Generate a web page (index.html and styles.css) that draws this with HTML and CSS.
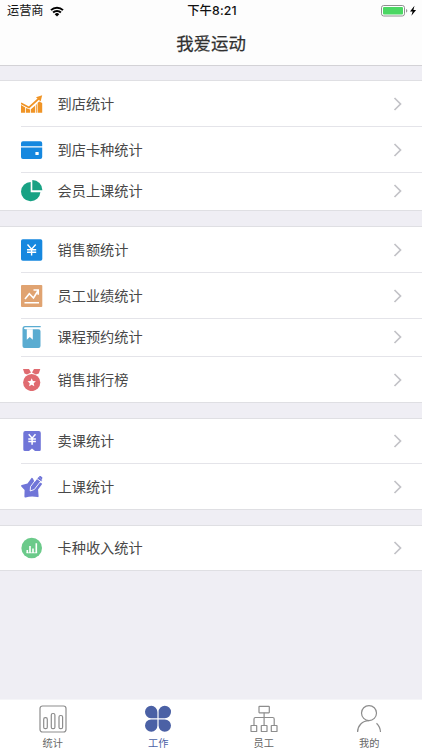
FILE: index.html
```html
<!DOCTYPE html>
<html lang="zh-CN">
<head>
<meta charset="utf-8">
<title>我爱运动</title>
<link rel="stylesheet" href="styles.css">
</head>
<body>
<div class="app">
  <header class="header">
    <div class="status">
      <div class="carrier"><span>运营商</span>
        <svg width="14" height="11" viewBox="0 0 14 11"><path d="M1 4.100a8.600 8.600 0 0 1 12 0M3.100 6.500a5.600 5.600 0 0 1 7.800 0" fill="none" stroke="#000" stroke-width="2"/><path d="M4.700 8.200a3.300 3.300 0 0 1 4.600 0L7 10.600z"/></svg>
      </div>
      <div class="time">下午8:21</div>
      <div class="power">
        <svg width="36" height="12" viewBox="0 0 36 12"><rect x=".5" y=".5" width="23" height="10.500" rx="2.200" fill="#fff" stroke="#8f8f8f"/><rect x="2" y="2" width="20" height="7.500" rx="1" fill="#4bd763"/><path d="M25 4v3.500q1.300-.4 1.300-1.800T25 4z" fill="#999"/><path d="M33.500.8l-4.500 5.600h2.600l-1.200 4.400 4.700-5.900h-2.700z"/></svg>
      </div>
    </div>
    <h1 class="title">我爱运动</h1>
  </header>
  <main class="content">
    <section class="group">
      <a class="row">
        <svg class="icon" viewBox="0 0 22 22"><path d="M0 12l4.200 2.500v5.300H0zM5 15l4 1.500V19.800H5zM9.800 16.300l4.200-3.500v7H9.800zM14.800 12l1-1v8.800h-1zM16.600 10l1.600-1.600 3 1.600v9.800h-4.600z" fill="#f09426"/><path d="M0 10.300l8 4.200L18.500 5" fill="none" stroke="#f09426" stroke-width="1.700"/><path d="M15 4.200l6.200-2-1.600 6.200z" fill="#f09426"/></svg>
        <span class="label">到店统计</span><svg class="chevron" viewBox="0 0 9 14"><path d="M1.500 1l6 6-6 6"/></svg></a>
      <a class="row">
        <svg class="icon" viewBox="0 0 22 22"><path d="M2 2.300h17.200q2 0 2 2v2.900H0V4.300q0-2 2-2zM0 8.500h21.200v9.400q0 2-2 2H2q-2 0-2-2z" fill="#1688df"/><rect x="14.400" y="12.900" width="3.300" height="3.200" rx=".5" fill="#fff"/></svg>
        <span class="label">到店卡种统计</span><svg class="chevron" viewBox="0 0 9 14"><path d="M1.500 1l6 6-6 6"/></svg></a>
      <a class="row short">
        <svg class="icon" viewBox="0 0 22 22"><path d="M9.700 1.900v10.400H19.400A9.700 9.700 0 1 1 9.700 1.900z" fill="#18a284"/><path d="M11.300 0a10 10 0 0 1 10 10.300h-10z" fill="#18a284"/></svg>
        <span class="label">会员上课统计</span><svg class="chevron" viewBox="0 0 9 14"><path d="M1.500 1l6 6-6 6"/></svg></a>
    </section>
    <section class="group">
      <a class="row">
        <svg class="icon" viewBox="0 0 22 22"><rect width="21.300" height="21.500" y=".3" rx="1.800" fill="#1688df"/><path d="M6.500 5.500l4.100 4.700 4.100-4.700M10.600 10.200V16.500M6 10.700h9.200M6 13.300h9.200" fill="none" stroke="#fff" stroke-width="1.400"/></svg>
        <span class="label">销售额统计</span><svg class="chevron" viewBox="0 0 9 14"><path d="M1.500 1l6 6-6 6"/></svg></a>
      <a class="row">
        <svg class="icon" viewBox="0 0 22 22"><rect width="21.300" height="22" rx="1" fill="#e0a371"/><path d="M4 14l4.300-5.300 4.200 4.300 4.300-7M12.500 5h4.700v4.800M3.500 17.700h14.500" fill="none" stroke="#fff" stroke-width="1.600"/></svg>
        <span class="label">员工业绩统计</span><svg class="chevron" viewBox="0 0 9 14"><path d="M1.500 1l6 6-6 6"/></svg></a>
      <a class="row short">
        <svg class="icon" viewBox="0 0 22 22"><path d="M4 0h15.700v1.200H4.500Q3 1.200 3 2.200t1.500 1h13q2 0 2 2v14.800q0 2-2 2H3.500q-2 0-2-2V2.500Q1.500 0 4 0z" fill="#5aacd1"/><path d="M5.800 3.200h6v10.500L8.800 11l-3 2.700z" fill="#fff"/></svg>
        <span class="label">课程预约统计</span><svg class="chevron" viewBox="0 0 9 14"><path d="M1.500 1l6 6-6 6"/></svg></a>
      <a class="row">
        <svg class="icon" viewBox="0 0 22 22"><path d="M2 0h6l2 3.500L6 5.500 3.500 4.600zM13 0h6.300l-1.500 4.500-3 1L11 3.500z" fill="#e06b70"/><circle cx="10.700" cy="13.500" r="8.600" fill="#e06b70"/><path d="M10.700 9.300l1.200 2.700 3 .3-2.200 2 .6 2.900-2.600-1.500-2.600 1.500.6-2.900-2.200-2 3-.3z" fill="#fff"/></svg>
        <span class="label">销售排行榜</span><svg class="chevron" viewBox="0 0 9 14"><path d="M1.500 1l6 6-6 6"/></svg></a>
    </section>
    <section class="group compact">
      <a class="row">
        <svg class="icon" viewBox="0 0 22 22"><path d="M4.300 1h13.500q2 0 2 2v16.500q0 1.700-1.700 1.500L14 21l-3-2.500L8 21l-4 .1q-1.700 0-1.700-1.700V3q0-2 2-2z" fill="#7075d8"/><path d="M7.700 4.200l3.400 4 3.400-4M11.100 8.200V14.700M7.300 8.900h7.600M7.300 11.500h7.600" fill="none" stroke="#fff" stroke-width="1.500"/></svg>
        <span class="label">卖课统计</span><svg class="chevron" viewBox="0 0 9 14"><path d="M1.500 1l6 6-6 6"/></svg></a>
      <a class="row">
        <svg class="icon" viewBox="0 0 22 22"><path d="M10.500 2q.7-.5 1.500.7l1.500 3 7 1.500q1 .4.300 1.200l-3.700 5 .5 6.800q0 1.200-1 .9-6-1.500-12 .3-1.300.2-1.200-1l.2-6.300L.3 10.500Q-.3 9.300.8 9l5.700-1.500z" fill="#7075d8"/><path d="M9.400 15.300l.9-4.700L17.500 1l3.800 3-7.500 9.500z" fill="#7075d8"/><path d="M15.500 2.600L9.500 10.700l-.3 4.300 4.100-1.500 6.800-8.800M15.800 2.500l4.200 3.200" fill="none" stroke="#fff" stroke-width=".9"/><path d="M18.400.2q.6-.5 1.200-.1l1.500 1.200q.6.500.1 1.200l-.7 1L17.800 1.200z" fill="#7075d8"/></svg>
        <span class="label">上课统计</span><svg class="chevron" viewBox="0 0 9 14"><path d="M1.500 1l6 6-6 6"/></svg></a>
    </section>
    <section class="group single">
      <a class="row">
        <svg class="icon" viewBox="0 0 22 22"><circle cx="10.700" cy="11" r="10.300" fill="#6bca8a"/><path d="M6.300 13v3M9 9v7M12 11.500V16M15.300 6.200V16" stroke="#fff" stroke-width="1.600"/><path d="M5.500 15.800h10.600" stroke="#fff" stroke-width=".8"/></svg>
        <span class="label">卡种收入统计</span><svg class="chevron" viewBox="0 0 9 14"><path d="M1.500 1l6 6-6 6"/></svg></a>
    </section>
  </main>
  <nav class="tabs">
    <a class="tab"><svg viewBox="0 0 28 28"><rect x="1" y="1" width="26" height="26" rx="2.500"/><rect x="4.700" y="12.700" width="3.600" height="11" rx="1.500"/><rect x="12.300" y="8.500" width="3.600" height="15.200" rx="1.500"/><rect x="20" y="10.500" width="3.600" height="13.200" rx="1.500"/></svg><span>统计</span></a>
    <a class="tab active"><svg viewBox="0 0 28 28"><path d="M13.400 13.200H7a6.200 6.200 0 1 1 6.400-6.200zM14.600 13.200V7a6.200 6.200 0 1 1 6.200 6.200zM13.400 14.400v6A6.200 6.200 0 1 1 7 14.400zM14.600 14.400h6.200a6.200 6.200 0 1 1-6.200 6.200z"/></svg><span>工作</span></a>
    <a class="tab"><svg viewBox="0 0 28 28"><rect x="9" y="1.300" width="10.300" height="6.500" rx=".5"/><rect x="1" y="20.500" width="5.700" height="6" rx=".3"/><rect x="11.300" y="20.500" width="5.700" height="6" rx=".3"/><rect x="21.300" y="20.500" width="5.700" height="6" rx=".3"/><path d="M14.100 7.800v12.700M4 20.500V14q0-1.500 1.500-1.500h17.200q1.500 0 1.500 1.500v6.500"/></svg><span>员工</span></a>
    <a class="tab"><svg viewBox="0 0 28 28"><circle cx="14" cy="8.100" r="7.500"/><path d="M2.600 27c0-6.200 4.700-11.300 11.400-11.300M21.500 18.200q3.700 3.400 4 8.800"/></svg><span>我的</span></a>
  </nav>
</div>
</body>
</html>
```
FILE: styles.css
```css
* { box-sizing: border-box; }
body {
  margin: 0;
  font-family: Inter, "Noto Sans CJK SC", sans-serif;
  color: #484848;
}
svg { display: block; flex: none; }
.app {
  width: 422px;
  height: 750px;
  display: flex;
  flex-direction: column;
  background: #efeef4;
  overflow: hidden;
}
.header {
  height: 66px;
  background: #fdfdfd;
  border-bottom: 1px solid #d3d2d6;
}
.status {
  height: 22px;
  display: grid;
  grid-template-columns: 1fr auto 1fr;
  align-items: center;
  padding: 0 5px 0 7px;
  color: #111;
  font-size: 12px;
  line-height: 22px;
}
.carrier { display: flex; align-items: center; gap: 6px; font-size: 12.200px; }
.time { font-weight: 500; font-size: 12.300px; letter-spacing: .15px; }
.power { display: flex; justify-content: flex-end; }
.title {
  margin: 0;
  font-size: 17.400px;
  font-weight: 400;
  -webkit-text-stroke: .25px #303030;
  line-height: 43px;
  text-align: center;
  color: #303030;
}
.content { flex: 1; padding-top: 14px; }
.group {
  background: #fff;
  border-top: 1px solid #dfdfe3;
  border-bottom: 1px solid #dfdfe3;
  margin-bottom: 15px;
}
.row {
  height: 46px;
  margin-left: 20.500px;
  padding-right: 20px;
  display: flex;
  align-items: center;
  border-bottom: 1px solid #e4e4e9;
}
.row.short { height: 38px; padding-bottom: 1px; }
.row:last-child { border-bottom: 0; height: 45px; }
.row.short:last-child { height: 37px; }
.compact .row { height: 45px; }
.compact .row:last-child { height: 45px; }
.single .row:last-child { height: 44px; }
.icon { width: 22px; height: 22px; }
.label {
  flex: 1;
  margin-left: 15px;
  font-size: 14.200px;
  line-height: 22px;
}
.chevron { width: 9px; height: 14px; fill: none; stroke: #c2c2c7; stroke-width: 1.700; }
.tabs {
  height: 51px;
  display: grid;
  grid-template-columns: repeat(4, 1fr);
  background: #fff;
  border-top: 1px solid #f5f5f8;
}
.tab {
  display: flex;
  flex-direction: column;
  align-items: center;
  padding-top: 5px;
  font-size: 10.200px;
  line-height: 15px;
  color: #666;
}
.tab svg { width: 28px; height: 28px; fill: none; stroke: #8d8d8d; stroke-width: 1.200; margin-bottom: 3px; }
.tab.active { color: #4b61a5; }
.tab.active svg { fill: #4b61a5; stroke: none; }
```
